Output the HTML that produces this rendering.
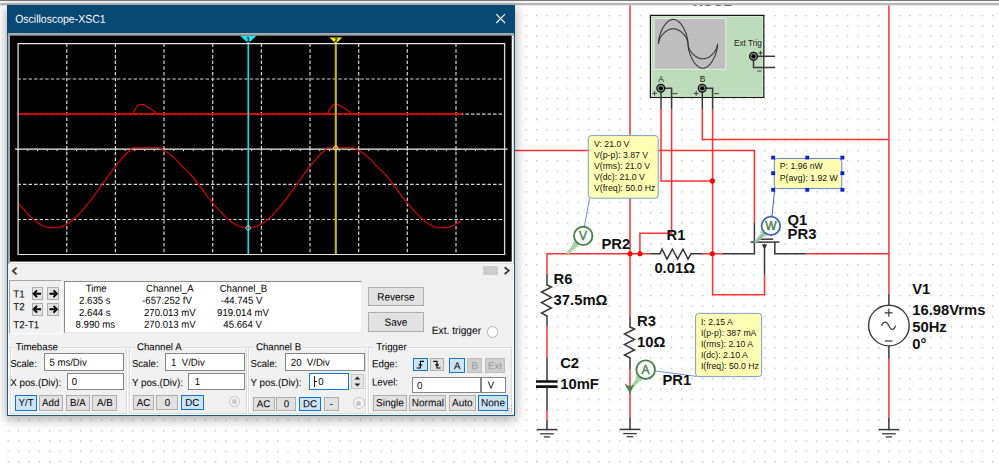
<!DOCTYPE html>
<html><head><meta charset="utf-8"><title>Oscilloscope-XSC1</title>
<style>
html,body{margin:0;padding:0;background:#fff;}
body{width:999px;height:470px;overflow:hidden;position:relative;font-family:"Liberation Sans", Arial, sans-serif;}
.abs,.t,.btn,.inp,.sunk,.data,.grp,.radio{position:absolute;box-sizing:border-box;}
.t{white-space:nowrap;}
#win{position:absolute;left:0;top:0;width:999px;height:470px;}
#winbg{position:absolute;left:6.8px;top:4.6px;width:508.4px;height:411.4px;background:#f0f0f0;border:1.2px solid #1c5a8e;box-sizing:border-box;box-shadow:0 3px 10px 1px rgba(0,0,0,0.32), inset 0 0 0 1.2px #fbfbfb;}
#title{position:absolute;left:7px;top:4.8px;width:508px;height:28.9px;background:#084872;}
.btn{background:#e1e1e1;border:1px solid #adadad;}
.btn.sel{background:#cce4f7;border:1.2px solid #1174c8;}
.btn.dis{background:#cfcfcf;border:1px solid #bfbfbf;}
.inp{background:#fff;border:1px solid #858585;}
.inp.foc{border:1.2px solid #0f78d4;}
.sunk{border:1px solid #a8a8a8;border-right-color:#fff;border-bottom-color:#fff;background:#f0f0f0;}
.data{background:#fff;border:1.2px solid #8c8c8c;border-right-color:#e8e8e8;border-bottom-color:#e8e8e8;}
.grp{border:1px solid #dcdcdc;box-shadow:1px 1px 0 #fff, inset 1px 1px 0 #fff;}
.radio{border-radius:50%;background:#fff;border:1px solid #b4b4b4;}
.radio.dis{border-color:#c4c4c4;background:#f4f4f4;}
.radio.dis i{position:absolute;left:2.3px;top:2.3px;width:5px;height:5px;border-radius:50%;background:#c8c8c8;}
</style></head>
<body>
<svg id="sch" class="abs" style="left:0;top:0" width="999" height="470" viewBox="0 0 999 470">
<defs><pattern id="dots" x="7.6" y="14.9" width="10.362" height="10.375" patternUnits="userSpaceOnUse"><rect x="0" y="0" width="1.3" height="1.3" fill="#b9b9b9"/></pattern>
<clipPath id="cl"><rect x="0" y="5" width="999" height="465"/></clipPath></defs>
<rect x="0" y="9" width="999" height="461" fill="url(#dots)"/><rect x="514" y="5" width="4" height="412" fill="#fff"/>
<g clip-path="url(#cl)" font-family='"Liberation Sans", Arial, sans-serif'>
<text x="693" y="5.5" font-size="14.8" font-weight="bold" fill="#111">XSC1</text>
<path d="M630 5 V317.5" stroke="#ff3232" stroke-width="1.5" fill="none"/>
<path d="M888.9 5 V294.5" stroke="#ff3232" stroke-width="1.5" fill="none"/>
<path d="M888.9 358.3 V418" stroke="#ff3232" stroke-width="1.5" fill="none"/>
<path d="M515 150.4 H754.4 V223.4" stroke="#ff3232" stroke-width="1.5" fill="none"/>
<path d="M702.3 108.6 V139.4 H888.9" stroke="#ff3232" stroke-width="1.5" fill="none"/>
<path d="M661 108.6 V180.9 H712.6" stroke="#ff3232" stroke-width="1.5" fill="none"/>
<path d="M671.6 108.6 V233.3 H639.9 V253.8" stroke="#ff3232" stroke-width="1.5" fill="none"/>
<path d="M712.6 108.6 V294.8 H764.5 V274.4" stroke="#ff3232" stroke-width="1.5" fill="none"/>
<path d="M547 275 V253.8 H650.6" stroke="#ff3232" stroke-width="1.5" fill="none"/>
<path d="M702.4 253.8 H723" stroke="#ff3232" stroke-width="1.5" fill="none"/>
<path d="M805.3 253.8 H888.9" stroke="#ff3232" stroke-width="1.5" fill="none"/>
<path d="M547 326 V357.6" stroke="#ff3232" stroke-width="1.5" fill="none"/>
<path d="M547 410.3 V420.8" stroke="#ff3232" stroke-width="1.5" fill="none"/>
<path d="M630 368.6 V418" stroke="#ff3232" stroke-width="1.5" fill="none"/>
<path d="M547 274.8 V285 L551.5 287 L541.5 292 L551.5 297.4 L541.5 302.6 L551.5 308 L541.5 313 L547 316 V326" stroke="#383838" stroke-width="1.5" fill="none"/>
<path d="M547 357.4 V381" stroke="#383838" stroke-width="1.5" fill="none"/>
<path d="M536 381.5 H557.6 M536 386.7 H557.6" stroke="#111" stroke-width="2.7" fill="none"/>
<path d="M547 387 V410.4" stroke="#383838" stroke-width="1.5" fill="none"/>
<path d="M547 420.6 V429.6" stroke="#383838" stroke-width="1.5" fill="none"/>
<path d="M536.7 429.6 H557.3" stroke="#383838" stroke-width="1.5" fill="none"/><path d="M540.2 433.8 H553.8" stroke="#383838" stroke-width="1.3" fill="none"/><path d="M543.8 436.90000000000003 H550.2" stroke="#383838" stroke-width="1.3" fill="none"/>
<path d="M630 317.3 V327 L634.5 329 L624.5 334 L634.5 339.4 L624.5 344.6 L634.5 350 L624.5 355 L630 358 V368.8" stroke="#383838" stroke-width="1.5" fill="none"/>
<path d="M630 417.8 V429.4" stroke="#383838" stroke-width="1.5" fill="none"/>
<path d="M619.7 429.4 H640.3" stroke="#383838" stroke-width="1.5" fill="none"/><path d="M623.2 433.59999999999997 H636.8" stroke="#383838" stroke-width="1.3" fill="none"/><path d="M626.8 436.7 H633.2" stroke="#383838" stroke-width="1.3" fill="none"/>
<path d="M650.4 253.8 H660 L662 249.1 L667 259.1 L672.4 249.1 L677.6 259.1 L683 249.1 L688 259.1 L691 253.8 H702.6" stroke="#383838" stroke-width="1.5" fill="none"/>
<path d="M722.8 253.8 H754.4 V223.2" stroke="#383838" stroke-width="1.5" fill="none"/>
<path d="M750.6 242.1 H779.4" stroke="#383838" stroke-width="1.5" fill="none"/>
<path d="M760 239.2 H773.2" stroke="#383838" stroke-width="1.5" fill="none"/>
<path d="M774.8 242.1 V253.8 H805.5" stroke="#383838" stroke-width="1.5" fill="none"/>
<path d="M764.5 244 V274.6" stroke="#383838" stroke-width="1.5" fill="none"/>
<path d="M761.8 244.6 H767.2 L764.5 249.6 Z" fill="#383838"/>
<path d="M888.9 294.3 V305.2" stroke="#383838" stroke-width="1.5" fill="none"/>
<path d="M888.9 345.8 V358.5" stroke="#383838" stroke-width="1.5" fill="none"/>
<circle cx="888.9" cy="325.5" r="20.3" fill="#fff" stroke="#383838" stroke-width="1.35"/>
<path d="M884.6 312.8 H892.6 M888.9 308.8 V316.8" stroke="#383838" stroke-width="1.2" fill="none"/>
<path d="M884.8 341 H892.4" stroke="#383838" stroke-width="1.2" fill="none"/>
<path d="M881.6 325.8 C883.6 320.8 886.6 320.8 888.9 325.8 S893.6 330.8 895.6 325.8" stroke="#383838" stroke-width="1.2" fill="none"/>
<path d="M888.9 418 V429.6" stroke="#383838" stroke-width="1.5" fill="none"/>
<path d="M878.6 429.6 H899.1999999999999" stroke="#383838" stroke-width="1.5" fill="none"/><path d="M882.1 433.8 H895.6999999999999" stroke="#383838" stroke-width="1.3" fill="none"/><path d="M885.6999999999999 436.90000000000003 H892.1" stroke="#383838" stroke-width="1.3" fill="none"/>
<circle cx="630" cy="253.8" r="2.6" fill="#ff0000"/>
<circle cx="639.9" cy="253.8" r="2.6" fill="#ff0000"/>
<circle cx="712.4" cy="253.8" r="2.6" fill="#ff0000"/>
<circle cx="712.4" cy="180.9" r="2.6" fill="#ff0000"/>
<rect x="650.4" y="15.4" width="113.4" height="82" fill="#bddcbb" stroke="#151515" stroke-width="1.25"/>
<rect x="651.6" y="16.6" width="111" height="79.6" fill="none" stroke="#d4ecd2" stroke-width="1"/>
<rect x="653.6" y="18" width="72.6" height="51.6" fill="#f0f4f0"/>
<rect x="654.4" y="18.8" width="71" height="50" fill="#bebebe"/>
<path d="M658.4 43.8 L658.8 39.4 L659.3 37.3 L659.7 35.7 L660.1 34.3 L660.5 33.1 L661.0 32.0 L661.4 31.0 L661.8 30.0 L662.2 29.1 L662.7 28.3 L663.1 27.6 L663.5 26.8 L663.9 26.2 L664.4 25.5 L664.8 24.9 L665.2 24.4 L665.6 23.8 L666.1 23.3 L666.5 22.9 L666.9 22.4 L667.3 22.0 L667.8 21.7 L668.2 21.3 L668.6 21.0 L669.0 20.7 L669.5 20.5 L669.9 20.2 L670.3 20.0 L670.8 19.9 L671.2 19.7 L671.6 19.6 L672.0 19.5 L672.5 19.4 L672.9 19.4 L673.3 19.4 L673.7 19.4 L674.2 19.5 L674.6 19.5 L675.0 19.6 L675.4 19.8 L675.9 19.9 L676.3 20.1 L676.7 20.3 L677.1 20.6 L677.6 20.9 L678.0 21.1 L678.4 21.5 L678.8 21.8 L679.3 22.2 L679.7 22.6 L680.1 23.1 L680.5 23.6 L681.0 24.1 L681.4 24.6 L681.8 25.2 L682.3 25.8 L682.7 26.5 L683.1 27.2 L683.5 27.9 L684.0 28.7 L684.4 29.6 L684.8 30.5 L685.2 31.5 L685.7 32.5 L686.1 33.7 L686.5 35.0 L686.9 36.5 L687.4 38.2 L687.8 40.8 L688.2 46.8 L688.6 49.4 L689.1 51.1 L689.5 52.6 L689.9 53.9 L690.3 55.1 L690.8 56.1 L691.2 57.1 L691.6 58.0 L692.0 58.9 L692.5 59.7 L692.9 60.4 L693.3 61.1 L693.7 61.8 L694.2 62.4 L694.6 63.0 L695.0 63.5 L695.5 64.0 L695.9 64.5 L696.3 65.0 L696.7 65.4 L697.2 65.8 L697.6 66.1 L698.0 66.5 L698.4 66.7 L698.9 67.0 L699.3 67.3 L699.7 67.5 L700.1 67.7 L700.6 67.8 L701.0 68.0 L701.4 68.1 L701.8 68.1 L702.3 68.2 L702.7 68.2 L703.1 68.2 L703.5 68.2 L704.0 68.1 L704.4 68.0 L704.8 67.9 L705.2 67.7 L705.7 67.6 L706.1 67.4 L706.5 67.1 L707.0 66.9 L707.4 66.6 L707.8 66.3 L708.2 65.9 L708.7 65.6 L709.1 65.2 L709.5 64.7 L709.9 64.3 L710.4 63.8 L710.8 63.2 L711.2 62.7 L711.6 62.1 L712.1 61.4 L712.5 60.8 L712.9 60.0 L713.3 59.3 L713.8 58.5 L714.2 57.6 L714.6 56.6 L715.0 55.6 L715.5 54.5 L715.9 53.3 L716.3 51.9 L716.7 50.3 L717.2 48.2 L717.6 43.8" stroke="#383838" stroke-width="1.1" fill="none"/>
<path d="M658.4 43.8 L658.8 41.1 L659.3 39.8 L659.7 38.8 L660.1 38.0 L660.5 37.2 L661.0 36.5 L661.4 35.9 L661.8 35.3 L662.2 34.8 L662.7 34.3 L663.1 33.8 L663.5 33.4 L663.9 33.0 L664.4 32.6 L664.8 32.2 L665.2 31.8 L665.6 31.5 L666.1 31.2 L666.5 30.9 L666.9 30.7 L667.3 30.4 L667.8 30.2 L668.2 30.0 L668.6 29.8 L669.0 29.6 L669.5 29.4 L669.9 29.3 L670.3 29.2 L670.8 29.1 L671.2 29.0 L671.6 28.9 L672.0 28.9 L672.5 28.8 L672.9 28.8 L673.3 28.8 L673.7 28.8 L674.2 28.8 L674.6 28.9 L675.0 29.0 L675.4 29.0 L675.9 29.1 L676.3 29.2 L676.7 29.4 L677.1 29.5 L677.6 29.7 L678.0 29.9 L678.4 30.1 L678.8 30.3 L679.3 30.5 L679.7 30.8 L680.1 31.1 L680.5 31.4 L681.0 31.7 L681.4 32.0 L681.8 32.4 L682.3 32.8 L682.7 33.2 L683.1 33.6 L683.5 34.0 L684.0 34.5 L684.4 35.1 L684.8 35.6 L685.2 36.2 L685.7 36.9 L686.1 37.6 L686.5 38.4 L686.9 39.3 L687.4 40.4 L687.8 41.9 L688.2 45.7 L688.6 47.2 L689.1 48.3 L689.5 49.2 L689.9 50.0 L690.3 50.7 L690.8 51.4 L691.2 52.0 L691.6 52.5 L692.0 53.1 L692.5 53.6 L692.9 54.0 L693.3 54.4 L693.7 54.8 L694.2 55.2 L694.6 55.6 L695.0 55.9 L695.5 56.2 L695.9 56.5 L696.3 56.8 L696.7 57.1 L697.2 57.3 L697.6 57.5 L698.0 57.7 L698.4 57.9 L698.9 58.1 L699.3 58.2 L699.7 58.4 L700.1 58.5 L700.6 58.6 L701.0 58.6 L701.4 58.7 L701.8 58.8 L702.3 58.8 L702.7 58.8 L703.1 58.8 L703.5 58.8 L704.0 58.7 L704.4 58.7 L704.8 58.6 L705.2 58.5 L705.7 58.4 L706.1 58.3 L706.5 58.2 L707.0 58.0 L707.4 57.8 L707.8 57.6 L708.2 57.4 L708.7 57.2 L709.1 56.9 L709.5 56.7 L709.9 56.4 L710.4 56.1 L710.8 55.8 L711.2 55.4 L711.6 55.0 L712.1 54.6 L712.5 54.2 L712.9 53.8 L713.3 53.3 L713.8 52.8 L714.2 52.3 L714.6 51.7 L715.0 51.1 L715.5 50.4 L715.9 49.6 L716.3 48.8 L716.7 47.8 L717.2 46.5 L717.6 43.8" stroke="#383838" stroke-width="1.1" fill="none"/>
<path d="M661 88.3 V108.8" stroke="#383838" stroke-width="1.5" fill="none"/>
<path d="M661 88.3 H671.6 V108.8" stroke="#383838" stroke-width="1.5" fill="none"/>
<path d="M702.3 88.3 V108.8" stroke="#383838" stroke-width="1.5" fill="none"/>
<path d="M702.3 88.3 H712.6 V108.8" stroke="#383838" stroke-width="1.5" fill="none"/>
<path d="M753.5 56.3 H775" stroke="#383838" stroke-width="1.5" fill="none"/>
<path d="M753.5 56.3 V67.4 H775" stroke="#383838" stroke-width="1.5" fill="none"/>
<circle cx="660.8" cy="88.3" r="3.9" fill="#8a8a8a" stroke="#111" stroke-width="1.3"/><circle cx="660.8" cy="88.3" r="2.1" fill="#000"/>
<circle cx="702.2" cy="88.3" r="3.9" fill="#8a8a8a" stroke="#111" stroke-width="1.3"/><circle cx="702.2" cy="88.3" r="2.1" fill="#000"/>
<circle cx="753.5" cy="56.3" r="3.9" fill="#8a8a8a" stroke="#111" stroke-width="1.3"/><circle cx="753.5" cy="56.3" r="2.1" fill="#000"/>
<g font-size="8" fill="#222"><text x="658.3" y="82.1" font-size="8.4">A</text><text x="699.8" y="82.1" font-size="8.4">B</text><text x="734" y="46.4" font-size="8.7" textLength="27.9" lengthAdjust="spacingAndGlyphs">Ext Trig</text></g>
<path d="M652.2 93.4 H657 M654.6 91 V95.8" stroke="#383838" stroke-width="0.9" fill="none"/>
<path d="M672.6 93.6 H677.6" stroke="#383838" stroke-width="0.9" fill="none"/>
<path d="M693.8 93.4 H698.6 M696.2 91 V95.8" stroke="#383838" stroke-width="0.9" fill="none"/>
<path d="M714 93.6 H719" stroke="#383838" stroke-width="0.9" fill="none"/>
<path d="M758.4 53 H762.8 M760.6 50.8 V55.2" stroke="#383838" stroke-width="0.9" fill="none"/>
<path d="M757 71 H761.6" stroke="#383838" stroke-width="0.9" fill="none"/>
<path d="M584.4 226.4 L589.6 198.4" stroke="#6f90e0" stroke-width="1" fill="none"/>
<path d="M575.1 241.2 L566.2 252.9 L568.2 254.7 L578.9 244.5 Z" fill="#a9d6a6"/><path d="M572.9 242.1 L578.2 246.9" stroke="#a9d6a6" stroke-width="1.6" fill="none"/>
<circle cx="583.2" cy="235.9" r="9.2" fill="#fff" stroke="#4a824a" stroke-width="1.9"/>
<text x="583.2" y="240.3" font-size="12" text-anchor="middle" fill="#4a824a" stroke="#4a824a" stroke-width="0.45" transform="rotate(0.02)">V</text>
<path d="M772 216.4 L774.6 190" stroke="#3f66b8" stroke-width="1" fill="none"/>
<path d="M762.7 230.9 L753.9 241.9 L755.7 243.7 L766.3 234.4 Z" fill="#a9d6a6"/><path d="M760.4 231.7 L765.6 236.7" stroke="#a9d6a6" stroke-width="1.6" fill="none"/>
<path d="M764.6 233 L755.4 243" stroke="#3f66b8" stroke-width="0.6" fill="none"/>
<circle cx="770.9" cy="225.9" r="9.3" fill="#fff" stroke="#3f66b8" stroke-width="1.8"/>
<text x="770.9" y="230.2" font-size="12" text-anchor="middle" fill="#4a824a" stroke="#4a824a" stroke-width="0.45" transform="rotate(0.02)">W</text>
<path d="M655.4 371 L696.6 376.4" stroke="#6f90e0" stroke-width="1" fill="none"/>
<path d="M638.0 375.5 L630.0 388.0 L632.0 389.6 L642.0 378.6 Z" fill="#a9d6a6"/><path d="M635.8 376.6 L641.5 381.0" stroke="#a9d6a6" stroke-width="1.6" fill="none"/>
<path d="M624.4 383.4 L630.2 394 L634 384.2 L630.4 386.4 Z" fill="#4a824a"/>
<circle cx="645.7" cy="369.7" r="9.3" fill="#fff" stroke="#4a824a" stroke-width="1.9"/>
<text x="645.7" y="373.8" font-size="12" text-anchor="middle" fill="#4a824a" stroke="#4a824a" stroke-width="0.45" transform="rotate(0.02)">A</text>
<text x="601.5" y="249" font-size="14.8" font-weight="bold" fill="#111">PR2</text>
<text x="666.6" y="240" font-size="14.8" font-weight="bold" fill="#111">R1</text>
<text x="654.4" y="273.3" font-size="14.8" font-weight="bold" fill="#111">0.01Ω</text>
<text x="553.6" y="283.5" font-size="14.8" font-weight="bold" fill="#111">R6</text>
<text x="553.6" y="304.7" font-size="14.8" font-weight="bold" fill="#111">37.5mΩ</text>
<text x="560.2" y="368" font-size="14.8" font-weight="bold" fill="#111">C2</text>
<text x="560.2" y="388.5" font-size="14.8" font-weight="bold" fill="#111">10mF</text>
<text x="637" y="326.2" font-size="14.8" font-weight="bold" fill="#111">R3</text>
<text x="637" y="346.9" font-size="14.8" font-weight="bold" fill="#111">10Ω</text>
<text x="662.4" y="384.5" font-size="14.8" font-weight="bold" fill="#111">PR1</text>
<text x="787.6" y="224.7" font-size="14.8" font-weight="bold" fill="#111">Q1</text>
<text x="787.6" y="239.3" font-size="14.8" font-weight="bold" fill="#111">PR3</text>
<text x="912.2" y="294" font-size="14.8" font-weight="bold" fill="#111">V1</text>
<text x="912.2" y="314.9" font-size="14.8" font-weight="bold" fill="#111">16.98Vrms</text>
<text x="912.2" y="332.2" font-size="14.8" font-weight="bold" fill="#111">50Hz</text>
<text x="912.2" y="349.3" font-size="14.8" font-weight="bold" fill="#111">0°</text>
<rect x="588.3" y="135.6" width="69.9" height="62.6" rx="3" ry="3" fill="#ffffb4" stroke="#7c9bd4" stroke-width="1"/><g font-size="8.7" fill="#111"><text x="594" y="146.6">V: 21.0 V</text><text x="594" y="157.6">V(p-p): 3.87 V</text><text x="594" y="168.7">V(rms): 21.0 V</text><text x="594" y="179.7">V(dc): 21.0 V</text><text x="594" y="190.7">V(freq): 50.0 Hz</text></g>
<rect x="695.6" y="313.4" width="66.0" height="63.2" rx="3" ry="3" fill="#ffffb4" stroke="#7c9bd4" stroke-width="1"/><g font-size="8.7" fill="#111"><text x="700.9" y="324.6">I: 2.15 A</text><text x="700.9" y="335.6">I(p-p): 387 mA</text><text x="700.9" y="346.7">I(rms): 2.10 A</text><text x="700.9" y="357.7">I(dc): 2.10 A</text><text x="700.9" y="368.7">I(freq): 50.0 Hz</text></g>
<rect x="774.3" y="158.5" width="67.5" height="30.1" rx="3" ry="3" fill="#ffffb4" stroke="#5f86c8" stroke-width="1"/><g font-size="8.7" fill="#111"><text x="779.8" y="169.4">P: 1.96 nW</text><text x="779.8" y="180.6">P(avg): 1.92 W</text></g>
<rect x="771.2" y="155.7" width="3.9" height="3.8" fill="#0a1fe0"/>
<rect x="771.2" y="171.3" width="3.9" height="3.8" fill="#0a1fe0"/>
<rect x="771.2" y="187.9" width="3.9" height="3.8" fill="#0a1fe0"/>
<rect x="805.3" y="155.7" width="3.9" height="3.8" fill="#0a1fe0"/>
<rect x="805.3" y="187.9" width="3.9" height="3.8" fill="#0a1fe0"/>
<rect x="840.4" y="155.7" width="3.9" height="3.8" fill="#0a1fe0"/>
<rect x="840.4" y="171.3" width="3.9" height="3.8" fill="#0a1fe0"/>
<rect x="840.4" y="187.9" width="3.9" height="3.8" fill="#0a1fe0"/>
</g>
<rect x="0" y="0" width="999" height="5.2" fill="#f6f6f6"/><rect x="0" y="0" width="999" height="0.9" fill="#6c6c6c"/><rect x="0" y="3.5" width="999" height="1.1" fill="#7c7c7c"/><rect x="0" y="4.6" width="999" height="0.7" fill="#c4c4c4"/>
</svg>
<div id="winbg"></div>
<div id="win">
<div id="title"></div>
<div class="t" style="left:15px;top:11px;font-size:11.34px;line-height:14px;color:#fff;transform:translate(0.20px,0.80px) scaleX(0.9259) rotate(0.03deg);transform-origin:0 50%;">Oscilloscope-XSC1</div>
<svg class="abs" style="left:494px;top:12px" width="14" height="14" viewBox="0 0 14 14"><path d="M2.2 2.2 L11 11 M11 2.2 L2.2 11" stroke="#fff" stroke-width="1.15" fill="none"/></svg>
<svg class="abs" style="left:0;top:0" width="520" height="270" viewBox="0 0 520 270">
<rect x="8" y="33.5" width="506" height="231.1" fill="#b4b4b4"/>
<rect x="8" y="33.5" width="505.4" height="230.1" fill="#ffffff"/>
<rect x="8" y="33.5" width="505.4" height="2.3" fill="#a4a4a4"/>
<rect x="8" y="33.5" width="2" height="230.1" fill="#a4a4a4"/>
<rect x="10" y="35.6" width="501.7" height="226" fill="#000"/>
<line x1="66.8" y1="43.5" x2="66.8" y2="254.6" stroke="#d6d6d6" stroke-width="1.2" stroke-dasharray="3.5 2.2"/>
<line x1="115.4" y1="43.5" x2="115.4" y2="254.6" stroke="#d6d6d6" stroke-width="1.2" stroke-dasharray="3.5 2.2"/>
<line x1="164.0" y1="43.5" x2="164.0" y2="254.6" stroke="#d6d6d6" stroke-width="1.2" stroke-dasharray="3.5 2.2"/>
<line x1="212.7" y1="43.5" x2="212.7" y2="254.6" stroke="#d6d6d6" stroke-width="1.2" stroke-dasharray="3.5 2.2"/>
<line x1="261.4" y1="43.5" x2="261.4" y2="254.6" stroke="#d6d6d6" stroke-width="1.2" stroke-dasharray="3.5 2.2"/>
<line x1="310.0" y1="43.5" x2="310.0" y2="254.6" stroke="#d6d6d6" stroke-width="1.2" stroke-dasharray="3.5 2.2"/>
<line x1="358.7" y1="43.5" x2="358.7" y2="254.6" stroke="#d6d6d6" stroke-width="1.2" stroke-dasharray="3.5 2.2"/>
<line x1="407.3" y1="43.5" x2="407.3" y2="254.6" stroke="#d6d6d6" stroke-width="1.2" stroke-dasharray="3.5 2.2"/>
<line x1="456.0" y1="43.5" x2="456.0" y2="254.6" stroke="#d6d6d6" stroke-width="1.2" stroke-dasharray="3.5 2.2"/>
<line x1="17.5" y1="79.0" x2="504.6" y2="79.0" stroke="#d6d6d6" stroke-width="1.2" stroke-dasharray="3.45 2.08"/>
<line x1="17.5" y1="114.1" x2="504.6" y2="114.1" stroke="#d6d6d6" stroke-width="1.2" stroke-dasharray="3.45 2.08"/>
<line x1="17.5" y1="184.4" x2="504.6" y2="184.4" stroke="#d6d6d6" stroke-width="1.2" stroke-dasharray="3.45 2.08"/>
<line x1="17.5" y1="219.5" x2="504.6" y2="219.5" stroke="#d6d6d6" stroke-width="1.2" stroke-dasharray="3.45 2.08"/>
<line x1="18" y1="113.8" x2="462" y2="113.8" stroke="#d80000" stroke-width="1.7"/>
<polyline points="18.0,113.8 133.3,113.8 135.2,108.8 137.4,106.3 139.7,104.5 143.5,104.5 146.7,106.6 151.2,109.1 155.0,112.0 156.9,113.8 327.9,113.8 329.8,108.8 332.0,106.3 334.3,104.5 338.1,104.5 341.3,106.6 345.8,109.1 349.6,112.0 351.5,113.8 462.0,113.8" fill="none" stroke="#e00000" stroke-width="1.15" stroke-linejoin="round"/>
<line x1="15" y1="149.1" x2="507.6" y2="149.1" stroke="#f2f2f2" stroke-width="1.1"/>
<path d="M18.10 149.4 v1.7 M27.83 149.4 v1.7 M37.56 149.4 v1.7 M47.29 149.4 v1.7 M57.02 149.4 v1.7 M66.75 149.4 v1.7 M76.48 149.4 v1.7 M86.21 149.4 v1.7 M95.94 149.4 v1.7 M105.67 149.4 v1.7 M115.40 149.4 v1.7 M125.13 149.4 v1.7 M134.86 149.4 v1.7 M144.59 149.4 v1.7 M154.32 149.4 v1.7 M164.05 149.4 v1.7 M173.78 149.4 v1.7 M183.51 149.4 v1.7 M193.24 149.4 v1.7 M202.97 149.4 v1.7 M212.70 149.4 v1.7 M222.43 149.4 v1.7 M232.16 149.4 v1.7 M241.89 149.4 v1.7 M251.62 149.4 v1.7 M261.35 149.4 v1.7 M271.08 149.4 v1.7 M280.81 149.4 v1.7 M290.54 149.4 v1.7 M300.27 149.4 v1.7 M310.00 149.4 v1.7 M319.73 149.4 v1.7 M329.46 149.4 v1.7 M339.19 149.4 v1.7 M348.92 149.4 v1.7 M358.65 149.4 v1.7 M368.38 149.4 v1.7 M378.11 149.4 v1.7 M387.84 149.4 v1.7 M397.57 149.4 v1.7 M407.30 149.4 v1.7 M417.03 149.4 v1.7 M426.76 149.4 v1.7 M436.49 149.4 v1.7 M446.22 149.4 v1.7 M455.95 149.4 v1.7 M465.68 149.4 v1.7 M475.41 149.4 v1.7 M485.14 149.4 v1.7 M494.87 149.4 v1.7 M504.60 149.4 v1.7 " stroke="#e0e0e0" stroke-width="1" fill="none"/>
<polyline points="18.4,203.4 19.9,205.2 21.4,206.9 22.9,208.6 24.4,210.2 25.9,211.8 27.4,213.3 28.9,214.8 30.4,216.3 31.9,217.8 33.4,219.2 34.9,220.5 36.4,221.7 37.9,222.7 39.4,223.7 40.9,224.6 42.4,225.5 43.9,226.2 45.4,226.7 46.9,227.1 48.4,227.4 49.9,227.6 51.4,227.8 52.9,227.9 53.6,227.9 55.1,227.8 56.6,227.7 58.1,227.4 59.6,227.1 61.1,226.6 62.6,226.1 64.1,225.4 65.6,224.7 67.1,223.8 68.6,222.9 70.1,221.9 71.6,220.7 73.1,219.5 74.6,218.3 76.1,216.9 77.6,215.5 79.1,213.9 80.6,212.4 82.1,210.7 83.6,209.0 85.1,207.2 86.6,205.4 88.1,203.5 89.6,201.6 91.1,199.7 92.6,197.7 94.1,195.6 95.6,193.6 97.1,191.5 98.6,189.4 100.1,187.3 101.6,185.2 103.1,183.1 104.6,181.0 106.1,178.9 107.6,176.8 109.1,174.7 110.6,172.7 112.1,170.7 113.6,168.7 115.1,166.7 116.6,164.8 118.1,162.9 119.6,161.1 121.1,159.4 122.6,157.7 124.1,156.0 125.6,154.5 127.1,153.0 128.6,151.5 130.1,150.2 131.6,148.9 131.9,147.7 159.0,147.7 160.5,148.4 162.0,149.2 163.5,150.0 165.0,150.9 166.5,151.9 168.0,152.9 169.5,154.0 171.0,155.2 172.5,156.4 174.0,157.7 175.5,159.1 177.0,160.6 178.5,162.2 180.0,163.8 181.5,165.4 183.0,166.9 184.5,168.3 186.0,169.8 187.5,171.2 189.0,172.7 190.5,174.4 192.0,176.1 193.5,177.9 195.0,179.9 196.5,181.8 198.0,183.8 199.5,185.8 201.0,187.7 202.5,189.7 204.0,191.7 205.5,193.7 207.0,195.8 208.5,197.8 210.0,199.7 211.5,201.6 213.0,203.4 214.5,205.2 216.0,206.9 217.5,208.6 219.0,210.2 220.5,211.8 222.0,213.3 223.5,214.8 225.0,216.3 226.5,217.8 228.0,219.2 229.5,220.5 231.0,221.7 232.5,222.7 234.0,223.7 235.5,224.6 237.0,225.5 238.5,226.2 240.0,226.7 241.5,227.1 243.0,227.4 244.5,227.6 246.0,227.8 247.5,227.9 248.2,227.9 249.7,227.8 251.2,227.7 252.7,227.4 254.2,227.1 255.7,226.6 257.2,226.1 258.7,225.4 260.2,224.7 261.7,223.8 263.2,222.9 264.7,221.9 266.2,220.7 267.7,219.5 269.2,218.3 270.7,216.9 272.2,215.5 273.7,213.9 275.2,212.4 276.7,210.7 278.2,209.0 279.7,207.2 281.2,205.4 282.7,203.5 284.2,201.6 285.7,199.7 287.2,197.7 288.7,195.6 290.2,193.6 291.7,191.5 293.2,189.4 294.7,187.3 296.2,185.2 297.7,183.1 299.2,181.0 300.7,178.9 302.2,176.8 303.7,174.7 305.2,172.7 306.7,170.7 308.2,168.7 309.7,166.7 311.2,164.8 312.7,162.9 314.2,161.1 315.7,159.4 317.2,157.7 318.7,156.0 320.2,154.5 321.7,153.0 323.2,151.5 324.7,150.2 326.2,148.9 326.5,147.7 353.6,147.7 355.1,148.4 356.6,149.2 358.1,150.0 359.6,150.9 361.1,151.9 362.6,152.9 364.1,154.0 365.6,155.2 367.1,156.4 368.6,157.7 370.1,159.1 371.6,160.6 373.1,162.2 374.6,163.8 376.1,165.4 377.6,166.9 379.1,168.3 380.6,169.8 382.1,171.2 383.6,172.7 385.1,174.4 386.6,176.1 388.1,177.9 389.6,179.9 391.1,181.8 392.6,183.8 394.1,185.8 395.6,187.7 397.1,189.7 398.6,191.7 400.1,193.7 401.6,195.8 403.1,197.8 404.6,199.7 406.1,201.6 407.6,203.4 409.1,205.2 410.6,206.9 412.1,208.6 413.6,210.2 415.1,211.8 416.6,213.3 418.1,214.8 419.6,216.3 421.1,217.8 422.6,219.2 424.1,220.5 425.6,221.7 427.1,222.7 428.6,223.7 430.1,224.6 431.6,225.5 433.1,226.2 434.6,226.7 436.1,227.1 437.6,227.4 439.1,227.6 440.6,227.8 442.1,227.9 442.8,227.9 444.3,227.8 445.8,227.7 447.3,227.4 448.8,227.1 450.3,226.6 451.8,226.1 453.3,225.4 454.8,224.7 456.3,223.8 457.8,222.9 459.3,221.9 460.8,220.7" fill="none" stroke="#e00000" stroke-width="1.15" stroke-linejoin="round"/>
<line x1="248.3" y1="43" x2="248.3" y2="254.6" stroke="#19dde6" stroke-width="1.7"/>
<polygon points="240.2,35.8 256.4,35.8 248.3,43.6" fill="#19e6ee"/>
<text x="248.2" y="42" font-size="7" font-weight="bold" text-anchor="middle" fill="#000" font-family='"Liberation Sans", Arial, sans-serif'>1</text>
<circle cx="248.1" cy="228" r="2.3" fill="none" stroke="#8fe9ee" stroke-width="0.9"/>
<line x1="335.8" y1="43" x2="335.8" y2="254.6" stroke="#c9ba04" stroke-width="2.1"/>
<polygon points="329.4,37.4 342.2,37.4 335.8,43.8" fill="#f2ee10"/>
<text x="335.8" y="42.4" font-size="5.8" font-weight="bold" text-anchor="middle" fill="#000" font-family='"Liberation Sans", Arial, sans-serif'>2</text>
<circle cx="335.8" cy="148" r="2.2" fill="none" stroke="#f0eca0" stroke-width="0.9"/>
<path d="M17.5 43.6 H505.20000000000005 M17.5 254.5 H505.20000000000005" stroke="#e2e2e2" stroke-width="1.2" fill="none"/>
<path d="M18.1 43.6 V254.5 M504.6 43.6 V254.5" stroke="#d8d8d8" stroke-width="1.3" fill="none"/>
</svg>
<div class="abs" style="left:8.00px;top:264.00px;width:506.00px;height:15.60px;background:#f0f0f0"></div>
<div class="abs" style="left:483.00px;top:266.00px;width:15.20px;height:8.80px;background:#cdcdcd"></div>
<svg class="abs" style="left:10px;top:265px" width="10" height="12" viewBox="0 0 10 12"><path d="M6.6 2.6 L2.8 6 L6.6 9.4" stroke="#3a3a3a" stroke-width="1.8" fill="none"/></svg>
<svg class="abs" style="left:502px;top:265px" width="10" height="12" viewBox="0 0 10 12"><path d="M2.6 2.2 L6.8 5.6 L2.6 9" stroke="#3a3a3a" stroke-width="1.8" fill="none"/></svg>
<div class="sunk" style="left:8.50px;top:280.20px;width:53.50px;height:53.40px;"></div>
<div class="t" style="left:13px;top:288px;font-size:10.29px;line-height:12px;color:#000;transform:translate(0.20px,0.40px) scaleX(0.9524) rotate(0.03deg);transform-origin:0 50%;">T1</div>
<div class="t" style="left:13px;top:301px;font-size:10.29px;line-height:12px;color:#000;transform:translate(0.20px,0.20px) scaleX(0.9524) rotate(0.03deg);transform-origin:0 50%;">T2</div>
<div class="t" style="left:13px;top:319px;font-size:10.29px;line-height:12px;color:#000;transform:translate(0.20px,0.30px) scaleX(0.9524) rotate(0.03deg);transform-origin:0 50%;">T2-T1</div>
<div class="btn" style="left:31.50px;top:287.20px;width:11.80px;height:13.00px;"></div><svg class="abs" style="left:0;top:0" width="70" height="340" viewBox="0 0 70 340"><path d="M41.0 293.7 L35.4 293.7 M37.0 290.3 L33.6 293.7 L37.0 297.1" stroke="#000" stroke-width="1.9" fill="none" stroke-linejoin="miter"/></svg>
<div class="btn" style="left:47.20px;top:287.20px;width:11.80px;height:13.00px;"></div><svg class="abs" style="left:0;top:0" width="70" height="340" viewBox="0 0 70 340"><path d="M49.5 293.7 L55.1 293.7 M53.5 290.3 L56.9 293.7 L53.5 297.1" stroke="#000" stroke-width="1.9" fill="none" stroke-linejoin="miter"/></svg>
<div class="btn" style="left:31.50px;top:302.80px;width:11.80px;height:12.80px;"></div><svg class="abs" style="left:0;top:0" width="70" height="340" viewBox="0 0 70 340"><path d="M41.0 309.2 L35.4 309.2 M37.0 305.8 L33.6 309.2 L37.0 312.6" stroke="#000" stroke-width="1.9" fill="none" stroke-linejoin="miter"/></svg>
<div class="btn" style="left:47.20px;top:302.80px;width:11.80px;height:12.80px;"></div><svg class="abs" style="left:0;top:0" width="70" height="340" viewBox="0 0 70 340"><path d="M49.5 309.2 L55.1 309.2 M53.5 305.8 L56.9 309.2 L53.5 312.6" stroke="#000" stroke-width="1.9" fill="none" stroke-linejoin="miter"/></svg>
<div class="data" style="left:63.50px;top:280.60px;width:298.70px;height:52.80px;"></div>
<div class="t" style="left:-4px;width:200px;text-align:center;top:282px;font-size:10.08px;line-height:12px;color:#000;transform:translate(0.20px,0.70px) scaleX(0.9524) rotate(0.03deg);transform-origin:50% 50%;">Time</div>
<div class="t" style="left:69px;width:200px;text-align:center;top:282px;font-size:10.08px;line-height:12px;color:#000;transform:translate(0.80px,0.70px) scaleX(0.9524) rotate(0.03deg);transform-origin:50% 50%;">Channel_A</div>
<div class="t" style="left:143px;width:200px;text-align:center;top:282px;font-size:10.08px;line-height:12px;color:#000;transform:translate(0.40px,0.70px) scaleX(0.9524) rotate(0.03deg);transform-origin:50% 50%;">Channel_B</div>
<div class="t" style="left:-6px;width:200px;text-align:center;top:294px;font-size:10.08px;line-height:12px;color:#000;transform:translate(0.80px,0.80px) scaleX(0.9524) rotate(0.03deg);transform-origin:50% 50%;">2.635 s</div>
<div class="t" style="left:67px;width:200px;text-align:center;top:294px;font-size:10.08px;line-height:12px;color:#000;transform:translate(0.00px,0.80px) scaleX(0.9524) rotate(0.03deg);transform-origin:50% 50%;">-657.252 fV</div>
<div class="t" style="left:141px;width:200px;text-align:center;top:294px;font-size:10.08px;line-height:12px;color:#000;transform:translate(0.50px,0.80px) scaleX(0.9524) rotate(0.03deg);transform-origin:50% 50%;">-44.745 V</div>
<div class="t" style="left:-6px;width:200px;text-align:center;top:307px;font-size:10.08px;line-height:12px;color:#000;transform:translate(0.80px,0.00px) scaleX(0.9524) rotate(0.03deg);transform-origin:50% 50%;">2.644 s</div>
<div class="t" style="left:69px;width:200px;text-align:center;top:307px;font-size:10.08px;line-height:12px;color:#000;transform:translate(0.90px,0.00px) scaleX(0.9524) rotate(0.03deg);transform-origin:50% 50%;">270.013 mV</div>
<div class="t" style="left:143px;width:200px;text-align:center;top:307px;font-size:10.08px;line-height:12px;color:#000;transform:translate(0.00px,0.00px) scaleX(0.9524) rotate(0.03deg);transform-origin:50% 50%;">919.014 mV</div>
<div class="t" style="left:-5px;width:200px;text-align:center;top:318px;font-size:10.08px;line-height:12px;color:#000;transform:translate(0.30px,0.80px) scaleX(0.9524) rotate(0.03deg);transform-origin:50% 50%;">8.990 ms</div>
<div class="t" style="left:69px;width:200px;text-align:center;top:318px;font-size:10.08px;line-height:12px;color:#000;transform:translate(0.90px,0.80px) scaleX(0.9524) rotate(0.03deg);transform-origin:50% 50%;">270.013 mV</div>
<div class="t" style="left:142px;width:200px;text-align:center;top:318px;font-size:10.08px;line-height:12px;color:#000;transform:translate(0.60px,0.80px) scaleX(0.9524) rotate(0.03deg);transform-origin:50% 50%;">45.664 V</div>
<div class="btn" style="left:368.00px;top:287.00px;width:55.80px;height:18.80px;"></div><div class="t" style="left:295px;width:200px;text-align:center;top:290px;font-size:10.5px;line-height:12px;color:#000;transform:translate(0.90px,0.40px) scaleX(0.9524) rotate(0.03deg);transform-origin:50% 50%;">Reverse</div>
<div class="btn" style="left:368.00px;top:312.40px;width:55.80px;height:19.20px;"></div><div class="t" style="left:295px;width:200px;text-align:center;top:315px;font-size:10.5px;line-height:12px;color:#000;transform:translate(0.90px,0.80px) scaleX(0.9524) rotate(0.03deg);transform-origin:50% 50%;">Save</div>
<div class="t" style="left:431px;top:324px;font-size:10.71px;line-height:12px;color:#000;transform:translate(0.80px,0.10px) scaleX(0.9524) rotate(0.03deg);transform-origin:0 50%;">Ext. trigger</div>
<div class="radio" style="left:486.6px;top:326px;width:11.6px;height:11.6px;"></div>
<div class="grp" style="left:10.20px;top:346.60px;width:116.40px;height:67.20px;"></div><div class="abs" style="left:13.70px;top:340.00px;width:45.00px;height:12.00px;background:#f0f0f0"></div><div class="t" style="left:15px;top:341px;font-size:10.19px;line-height:12px;color:#000;transform:translate(0.70px,0.20px) scaleX(0.9524) rotate(0.03deg);transform-origin:0 50%;">Timebase</div>
<div class="grp" style="left:128.80px;top:346.60px;width:118.20px;height:67.20px;"></div><div class="abs" style="left:134.90px;top:340.00px;width:49.50px;height:12.00px;background:#f0f0f0"></div><div class="t" style="left:136px;top:341px;font-size:10.19px;line-height:12px;color:#000;transform:translate(0.90px,0.20px) scaleX(0.9524) rotate(0.03deg);transform-origin:0 50%;">Channel A</div>
<div class="grp" style="left:248.40px;top:346.60px;width:117.60px;height:67.20px;"></div><div class="abs" style="left:253.90px;top:340.00px;width:48.00px;height:12.00px;background:#f0f0f0"></div><div class="t" style="left:255px;top:341px;font-size:10.19px;line-height:12px;color:#000;transform:translate(0.90px,0.20px) scaleX(0.9524) rotate(0.03deg);transform-origin:0 50%;">Channel B</div>
<div class="grp" style="left:367.80px;top:346.60px;width:144.60px;height:67.20px;"></div><div class="abs" style="left:374.30px;top:340.00px;width:34.00px;height:12.00px;background:#f0f0f0"></div><div class="t" style="left:376px;top:341px;font-size:10.19px;line-height:12px;color:#000;transform:translate(0.30px,0.20px) scaleX(0.9524) rotate(0.03deg);transform-origin:0 50%;">Trigger</div>
<div class="t" style="left:10px;top:358px;font-size:10.08px;line-height:12px;color:#000;transform:translate(0.20px,0.00px) scaleX(0.9524) rotate(0.03deg);transform-origin:0 50%;">Scale:</div>
<div class="inp" style="left:43.70px;top:353.40px;width:79.90px;height:17.20px;"></div>
<div class="t" style="left:49px;top:356px;font-size:10.08px;line-height:12px;color:#000;transform:translate(0.40px,0.80px) scaleX(0.9524) rotate(0.03deg);transform-origin:0 50%;">5 ms/Div</div>
<div class="t" style="left:10px;top:377px;font-size:10.29px;line-height:12px;color:#000;transform:translate(0.20px,0.00px) scaleX(0.9524) rotate(0.03deg);transform-origin:0 50%;">X pos.(Div):</div>
<div class="inp" style="left:66.50px;top:372.50px;width:57.10px;height:17.80px;"></div>
<div class="t" style="left:71px;top:376px;font-size:10.08px;line-height:12px;color:#000;transform:translate(0.80px,0.00px) scaleX(0.9524) rotate(0.03deg);transform-origin:0 50%;">0</div>
<div class="btn sel" style="left:15.30px;top:394.60px;width:21.50px;height:16.20px;"></div><div class="t" style="left:-74px;width:200px;text-align:center;top:397px;font-size:10.19px;line-height:12px;color:#000;transform:translate(0.05px,0.10px) scaleX(0.9524) rotate(0.03deg);transform-origin:50% 50%;">Y/T</div>
<div class="btn" style="left:38.90px;top:394.60px;width:23.70px;height:16.20px;"></div><div class="t" style="left:-50px;width:200px;text-align:center;top:397px;font-size:10.19px;line-height:12px;color:#000;transform:translate(0.75px,0.10px) scaleX(0.9524) rotate(0.03deg);transform-origin:50% 50%;">Add</div>
<div class="btn" style="left:66.10px;top:394.60px;width:23.60px;height:16.20px;"></div><div class="t" style="left:-23px;width:200px;text-align:center;top:397px;font-size:10.19px;line-height:12px;color:#000;transform:translate(0.90px,0.10px) scaleX(0.9524) rotate(0.03deg);transform-origin:50% 50%;">B/A</div>
<div class="btn" style="left:92.30px;top:394.60px;width:25.10px;height:16.20px;"></div><div class="t" style="left:4px;width:200px;text-align:center;top:397px;font-size:10.19px;line-height:12px;color:#000;transform:translate(0.85px,0.10px) scaleX(0.9524) rotate(0.03deg);transform-origin:50% 50%;">A/B</div>
<div class="t" style="left:131px;top:358px;font-size:10.08px;line-height:12px;color:#000;transform:translate(0.90px,0.00px) scaleX(0.9524) rotate(0.03deg);transform-origin:0 50%;">Scale:</div>
<div class="inp" style="left:165.40px;top:353.40px;width:79.50px;height:17.20px;"></div>
<div class="t" style="left:171px;top:356px;font-size:10.08px;line-height:12px;color:#000;transform:translate(0.10px,0.80px) scaleX(0.9524) rotate(0.03deg);transform-origin:0 50%;">1&nbsp; V/Div</div>
<div class="t" style="left:131px;top:377px;font-size:10.29px;line-height:12px;color:#000;transform:translate(0.90px,0.00px) scaleX(0.9524) rotate(0.03deg);transform-origin:0 50%;">Y pos.(Div):</div>
<div class="inp" style="left:188.40px;top:372.50px;width:56.50px;height:17.80px;"></div>
<div class="t" style="left:194px;top:376px;font-size:10.08px;line-height:12px;color:#000;transform:translate(0.70px,0.00px) scaleX(0.9524) rotate(0.03deg);transform-origin:0 50%;">1</div>
<div class="btn" style="left:133.00px;top:394.60px;width:20.90px;height:15.90px;"></div><div class="t" style="left:43px;width:200px;text-align:center;top:396px;font-size:10.19px;line-height:12px;color:#000;transform:translate(0.45px,0.95px) scaleX(0.9524) rotate(0.03deg);transform-origin:50% 50%;">AC</div>
<div class="btn" style="left:156.40px;top:394.60px;width:22.00px;height:15.90px;"></div><div class="t" style="left:67px;width:200px;text-align:center;top:396px;font-size:10.19px;line-height:12px;color:#000;transform:translate(0.40px,0.95px) scaleX(0.9524) rotate(0.03deg);transform-origin:50% 50%;">0</div>
<div class="btn sel" style="left:180.90px;top:394.60px;width:22.80px;height:15.90px;"></div><div class="t" style="left:92px;width:200px;text-align:center;top:396px;font-size:10.19px;line-height:12px;color:#000;transform:translate(0.30px,0.95px) scaleX(0.9524) rotate(0.03deg);transform-origin:50% 50%;">DC</div>
<div class="radio dis" style="left:228.8px;top:395.5px;width:11.6px;height:11.6px;"><i></i></div>
<div class="t" style="left:250px;top:358px;font-size:10.08px;line-height:12px;color:#000;transform:translate(0.50px,0.00px) scaleX(0.9524) rotate(0.03deg);transform-origin:0 50%;">Scale:</div>
<div class="inp" style="left:285.40px;top:353.40px;width:79.50px;height:17.20px;"></div>
<div class="t" style="left:290px;top:356px;font-size:10.08px;line-height:12px;color:#000;transform:translate(0.80px,0.80px) scaleX(0.9524) rotate(0.03deg);transform-origin:0 50%;">20&nbsp; V/Div</div>
<div class="t" style="left:250px;top:377px;font-size:10.29px;line-height:12px;color:#000;transform:translate(0.50px,0.00px) scaleX(0.9524) rotate(0.03deg);transform-origin:0 50%;">Y pos.(Div):</div>
<div class="inp foc" style="left:309.00px;top:372.50px;width:40.20px;height:17.80px;"></div>
<div class="t" style="left:318px;top:376px;font-size:10.08px;line-height:12px;color:#000;transform:translate(0.20px,0.00px) scaleX(0.9524) rotate(0.03deg);transform-origin:0 50%;">0</div>
<div class="abs" style="left:314.40px;top:376.00px;width:0.90px;height:11.40px;background:#222"></div>
<div class="abs" style="left:315.40px;top:381.00px;width:1.80px;height:1.00px;background:#000"></div>
<div class="abs" style="left:351.10px;top:373.70px;width:12.50px;height:15.70px;background:#e6e6e6;border:1px solid #c8c8c8;box-sizing:border-box"></div>
<svg class="abs" style="left:351px;top:373px" width="13" height="17" viewBox="0 0 13 17"><path d="M3.4 6.4 L6.4 3.4 L9.4 6.4 Z M3.4 10.6 L6.4 13.6 L9.4 10.6 Z" fill="#222"/></svg>
<div class="btn" style="left:252.50px;top:396.50px;width:22.00px;height:14.90px;"></div><div class="t" style="left:163px;width:200px;text-align:center;top:398px;font-size:10.19px;line-height:12px;color:#000;transform:translate(0.50px,0.35px) scaleX(0.9524) rotate(0.03deg);transform-origin:50% 50%;">AC</div>
<div class="btn" style="left:276.40px;top:396.50px;width:20.10px;height:14.90px;"></div><div class="t" style="left:186px;width:200px;text-align:center;top:398px;font-size:10.19px;line-height:12px;color:#000;transform:translate(0.45px,0.35px) scaleX(0.9524) rotate(0.03deg);transform-origin:50% 50%;">0</div>
<div class="btn sel" style="left:298.80px;top:396.50px;width:22.60px;height:14.90px;"></div><div class="t" style="left:210px;width:200px;text-align:center;top:398px;font-size:10.19px;line-height:12px;color:#000;transform:translate(0.10px,0.35px) scaleX(0.9524) rotate(0.03deg);transform-origin:50% 50%;">DC</div>
<div class="btn" style="left:323.90px;top:396.50px;width:15.10px;height:14.90px;"></div><div class="t" style="left:231px;width:200px;text-align:center;top:398px;font-size:10.19px;line-height:12px;color:#000;transform:translate(0.45px,0.35px) scaleX(0.9524) rotate(0.03deg);transform-origin:50% 50%;">-</div>
<div class="radio dis" style="left:353px;top:397.4px;width:11.6px;height:11.6px;"><i></i></div>
<div class="t" style="left:371px;top:358px;font-size:10.29px;line-height:12px;color:#000;transform:translate(0.90px,0.30px) scaleX(0.9524) rotate(0.03deg);transform-origin:0 50%;">Edge:</div>
<div class="btn sel" style="left:413.00px;top:357.80px;width:14.60px;height:13.30px;"></div>
<div class="btn" style="left:429.90px;top:357.80px;width:13.90px;height:13.30px;"></div>
<svg class="abs" style="left:413px;top:357.8px" width="31" height="14" viewBox="0 0 31 14"><path d="M3.6 10 H7.4 V3.4 H11 M5.6 6.8 H9.2" stroke="#000" stroke-width="1.15" fill="none"/><path d="M20.2 3.4 H24 V10 H27.6 M22.2 6.8 H25.8" stroke="#000" stroke-width="1.15" fill="none"/></svg>
<div class="btn sel" style="left:449.00px;top:357.80px;width:16.30px;height:14.90px;"></div><div class="t" style="left:357px;width:200px;text-align:center;top:360px;font-size:10.19px;line-height:12px;color:#000;transform:translate(0.15px,0.20px) scaleX(0.9524) rotate(0.03deg);transform-origin:50% 50%;">A</div>
<div class="btn dis" style="left:466.80px;top:357.80px;width:15.70px;height:14.90px;"></div><div class="t" style="left:374px;width:200px;text-align:center;top:360px;font-size:10.19px;line-height:12px;color:#9a9a9a;transform:translate(0.65px,0.20px) scaleX(0.9524) rotate(0.03deg);transform-origin:50% 50%;">B</div>
<div class="btn dis" style="left:485.00px;top:357.80px;width:19.90px;height:14.90px;"></div><div class="t" style="left:394px;width:200px;text-align:center;top:360px;font-size:10.19px;line-height:12px;color:#9a9a9a;transform:translate(0.95px,0.20px) scaleX(0.9524) rotate(0.03deg);transform-origin:50% 50%;">Ext</div>
<div class="t" style="left:371px;top:376px;font-size:10.29px;line-height:12px;color:#000;transform:translate(0.90px,0.50px) scaleX(0.9524) rotate(0.03deg);transform-origin:0 50%;">Level:</div>
<div class="inp" style="left:412.10px;top:376.50px;width:68.70px;height:16.30px;"></div>
<div class="t" style="left:417px;top:380px;font-size:10.08px;line-height:12px;color:#000;transform:translate(0.00px,0.00px) scaleX(0.9524) rotate(0.03deg);transform-origin:0 50%;">0</div>
<div class="inp" style="left:481.10px;top:376.50px;width:24.70px;height:16.30px;"></div>
<div class="t" style="left:487px;top:379px;font-size:10.08px;line-height:12px;color:#000;transform:translate(0.80px,0.40px) scaleX(0.9524) rotate(0.03deg);transform-origin:0 50%;">V</div>
<div class="btn" style="left:373.00px;top:394.80px;width:33.90px;height:16.00px;"></div><div class="t" style="left:289px;width:200px;text-align:center;top:396px;font-size:10.5px;line-height:12px;color:#000;transform:translate(0.95px,0.20px) scaleX(0.9524) rotate(0.03deg);transform-origin:50% 50%;">Single</div>
<div class="btn" style="left:409.40px;top:394.80px;width:37.10px;height:16.00px;"></div><div class="t" style="left:327px;width:200px;text-align:center;top:396px;font-size:10.5px;line-height:12px;color:#000;transform:translate(0.95px,0.20px) scaleX(0.9524) rotate(0.03deg);transform-origin:50% 50%;">Normal</div>
<div class="btn" style="left:449.00px;top:394.80px;width:26.80px;height:16.00px;"></div><div class="t" style="left:362px;width:200px;text-align:center;top:396px;font-size:10.5px;line-height:12px;color:#000;transform:translate(0.40px,0.20px) scaleX(0.9524) rotate(0.03deg);transform-origin:50% 50%;">Auto</div>
<div class="btn sel" style="left:478.30px;top:394.80px;width:29.40px;height:16.00px;"></div><div class="t" style="left:393px;width:200px;text-align:center;top:396px;font-size:10.5px;line-height:12px;color:#000;transform:translate(0.00px,0.20px) scaleX(0.9524) rotate(0.03deg);transform-origin:50% 50%;">None</div>
<svg class="abs" style="left:504.4px;top:404.4px" width="10" height="10" viewBox="0 0 10 10"><g fill="#b8b8b8"><rect x="7" y="1" width="1.4" height="1.4"/><rect x="4" y="4" width="1.4" height="1.4"/><rect x="7" y="4" width="1.4" height="1.4"/><rect x="1" y="7" width="1.4" height="1.4"/><rect x="4" y="7" width="1.4" height="1.4"/><rect x="7" y="7" width="1.4" height="1.4"/></g></svg>
</div>
</body></html>
